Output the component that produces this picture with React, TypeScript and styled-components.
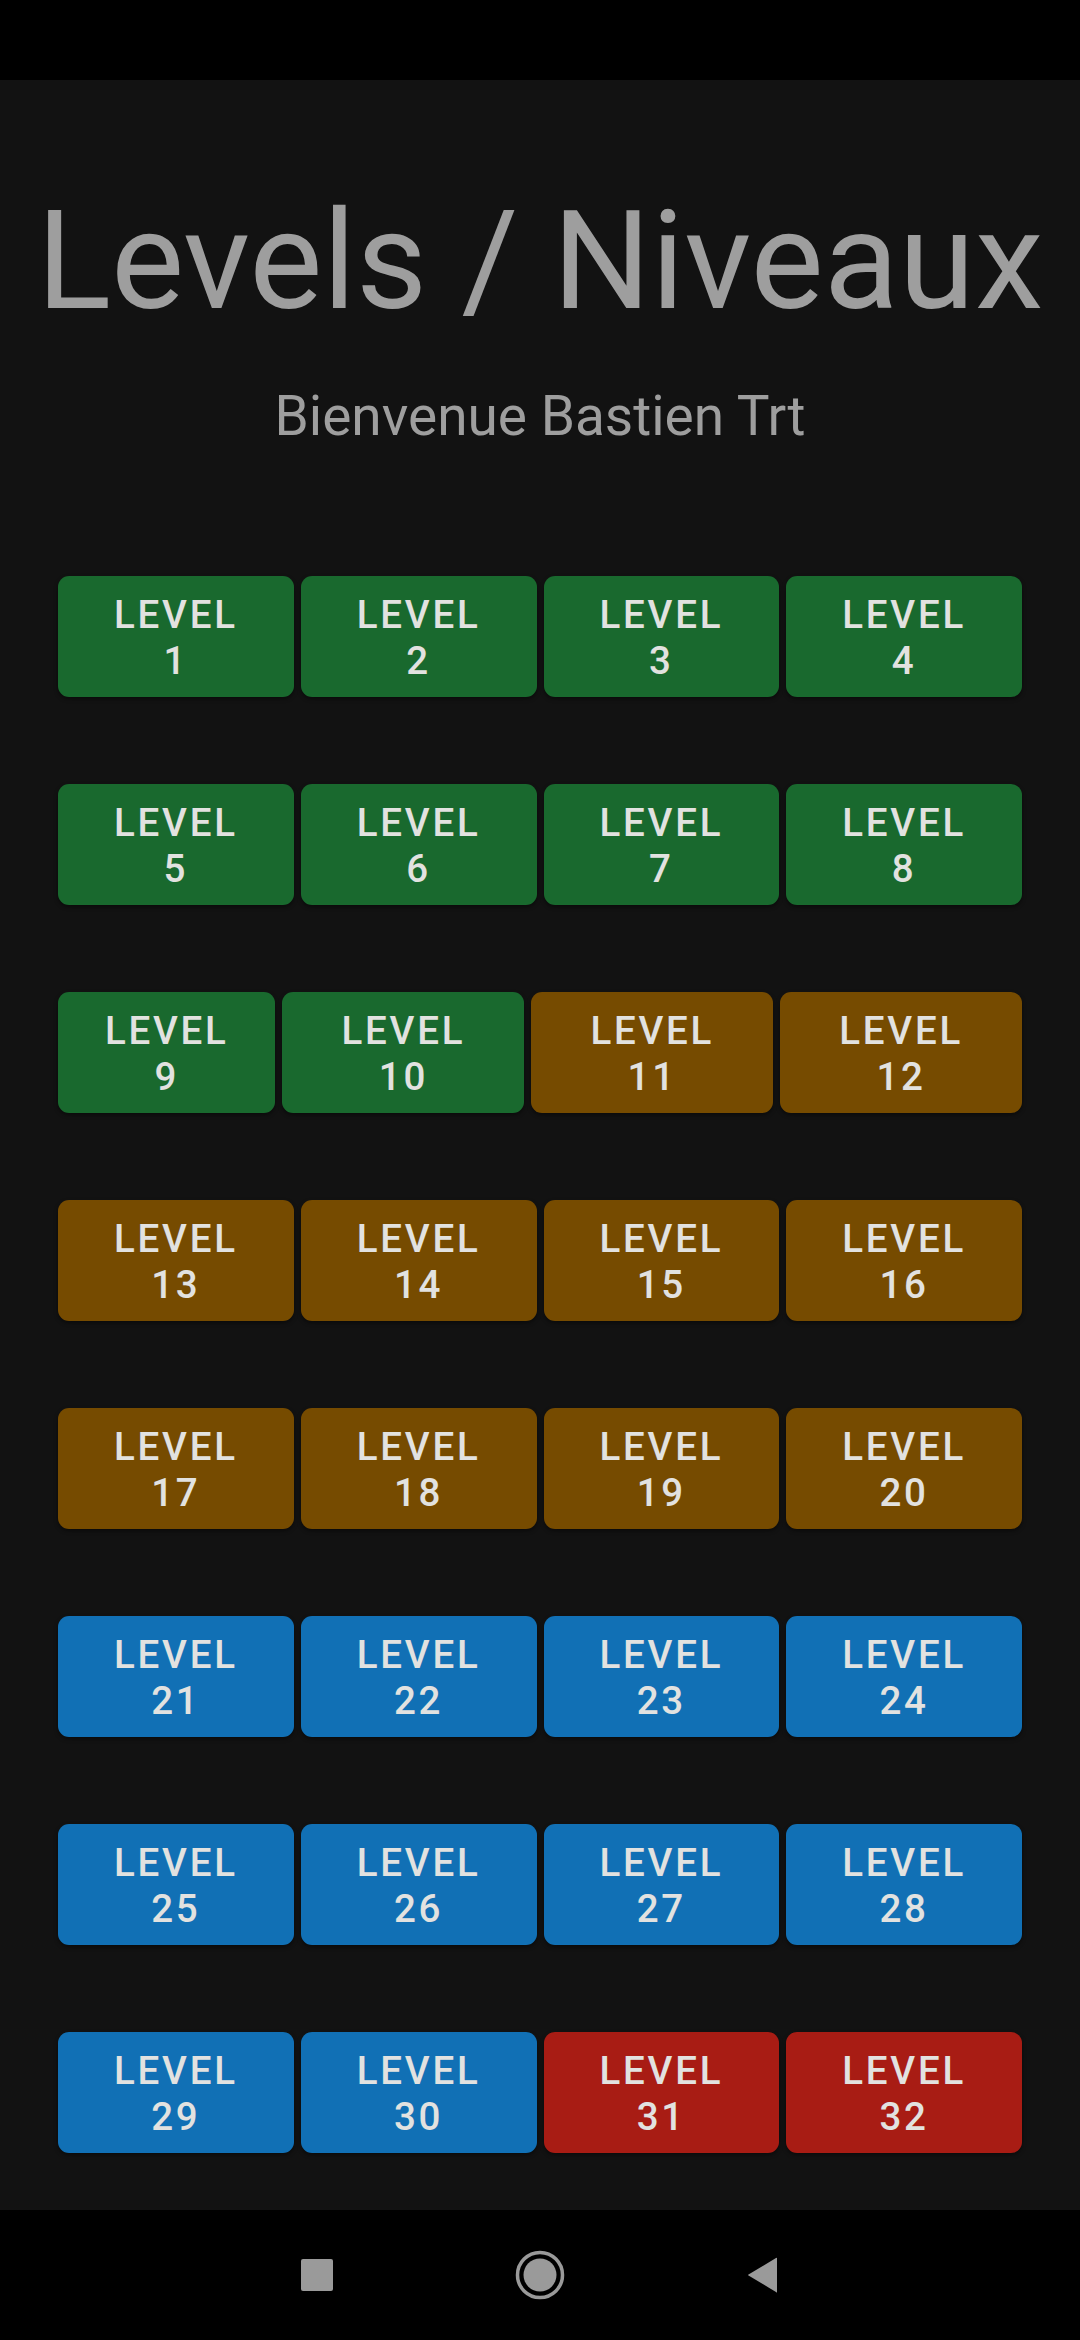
import styled, { createGlobalStyle } from "styled-components";

const GlobalStyle = createGlobalStyle`
	html, body {
		margin: 0;
		padding: 0;
		background: #000;
	}
	* {
		box-sizing: border-box;
	}
`;

type Status = "done" | "todo" | "open" | "hard";

const COLORS: Record<Status, string> = {
	done: "#19692e",
	todo: "#764b00",
	open: "#1170b5",
	hard: "#a81c14",
};

const Screen = styled.div`
	width: 1080px;
	height: 2340px;
	display: flex;
	flex-direction: column;
	font-family: Roboto, "Noto Sans", sans-serif;
	overflow: hidden;
`;

const StatusBar = styled.div`
	height: 80px;
	flex: none;
	background: #000;
`;

const Content = styled.main`
	flex: 1;
	background: #121212;
	display: flex;
	flex-direction: column;
	align-items: center;
	padding-top: 99px;
	overflow: hidden;
`;

const Title = styled.h1`
	margin: 0;
	font-size: 138px;
	font-weight: 400;
	line-height: 1.2;
	color: #9e9e9e;
	white-space: nowrap;
`;

const Subtitle = styled.h2`
	margin: 38px 0 0;
	font-size: 55px;
	font-weight: 400;
	line-height: 1.2;
	color: #9e9e9e;
`;

const Grid = styled.div`
	margin-top: 127px;
	width: 964px;
	display: flex;
	flex-direction: column;
	gap: 87px;
`;

const Row = styled.div`
	display: flex;
	gap: 7px;
`;

// buttons grow from a basis that depends on the number's length,
// so "LEVEL 9" ends up a bit narrower than "LEVEL 10" in the same row
const LevelButton = styled.button<{ $status: Status; $digits: number }>`
	flex: 1 1 ${(p) => p.$digits * 24.4}px;
	height: 121px;
	padding: 4px 0 0;
	border: none;
	border-radius: 11px;
	background: ${(p) => COLORS[p.$status]};
	box-shadow: 0 2px 4px rgba(0, 0, 0, 0.45);
	color: #e2e2e0;
	font-family: Roboto, "Noto Sans", sans-serif;
	font-size: 38.5px;
	font-weight: 500;
	line-height: 46px;
	letter-spacing: 2.75px;
	text-transform: uppercase;
	display: flex;
	flex-direction: column;
	align-items: center;
	justify-content: center;
	cursor: pointer;
`;

const NavBar = styled.nav`
	height: 130px;
	flex: none;
	background: #000;
	display: flex;
	align-items: center;
	justify-content: center;
`;

const NavSlot = styled.div`
	width: 223px;
	display: flex;
	justify-content: center;
	align-items: center;
`;

const statusOf = (n: number): Status => {
	if (n <= 10) return "done";
	if (n <= 20) return "todo";
	if (n <= 30) return "open";
	return "hard";
};

const levels = Array.from({ length: 32 }, (_, i) => i + 1);
const rows: number[][] = [];
for (let i = 0; i < levels.length; i += 4) {
	rows.push(levels.slice(i, i + 4));
}

export default function App() {
	return (
		<>
			<GlobalStyle />
			<Screen>
				<StatusBar />
				<Content>
					<Title>Levels / Niveaux</Title>
					<Subtitle>Bienvenue Bastien Trt</Subtitle>
					<Grid>
						{rows.map((row, r) => (
							<Row key={r}>
								{row.map((n) => (
									<LevelButton key={n} $status={statusOf(n)} $digits={String(n).length}>
										<span>Level</span>
										<span>{n}</span>
									</LevelButton>
								))}
							</Row>
						))}
					</Grid>
				</Content>
				<NavBar>
					<NavSlot>
						<svg width="34" height="34" viewBox="0 0 34 34">
							<rect x="1" y="1" width="32" height="32" rx="2" fill="#9a9a9a" />
						</svg>
					</NavSlot>
					<NavSlot>
						<svg width="52" height="52" viewBox="0 0 52 52">
							<circle cx="26" cy="26" r="22.5" fill="none" stroke="#9a9a9a" strokeWidth="3.5" />
							<circle cx="26" cy="26" r="16.5" fill="#9a9a9a" />
						</svg>
					</NavSlot>
					<NavSlot>
						<svg width="34" height="38" viewBox="0 0 34 38">
							<path d="M31 2 L31 36 Q31 37 30 36 L2.5 19.5 Q1.5 19 2.5 18.5 L30 2 Q31 1.5 31 2 Z" fill="#9a9a9a" />
						</svg>
					</NavSlot>
				</NavBar>
			</Screen>
		</>
	);
}
